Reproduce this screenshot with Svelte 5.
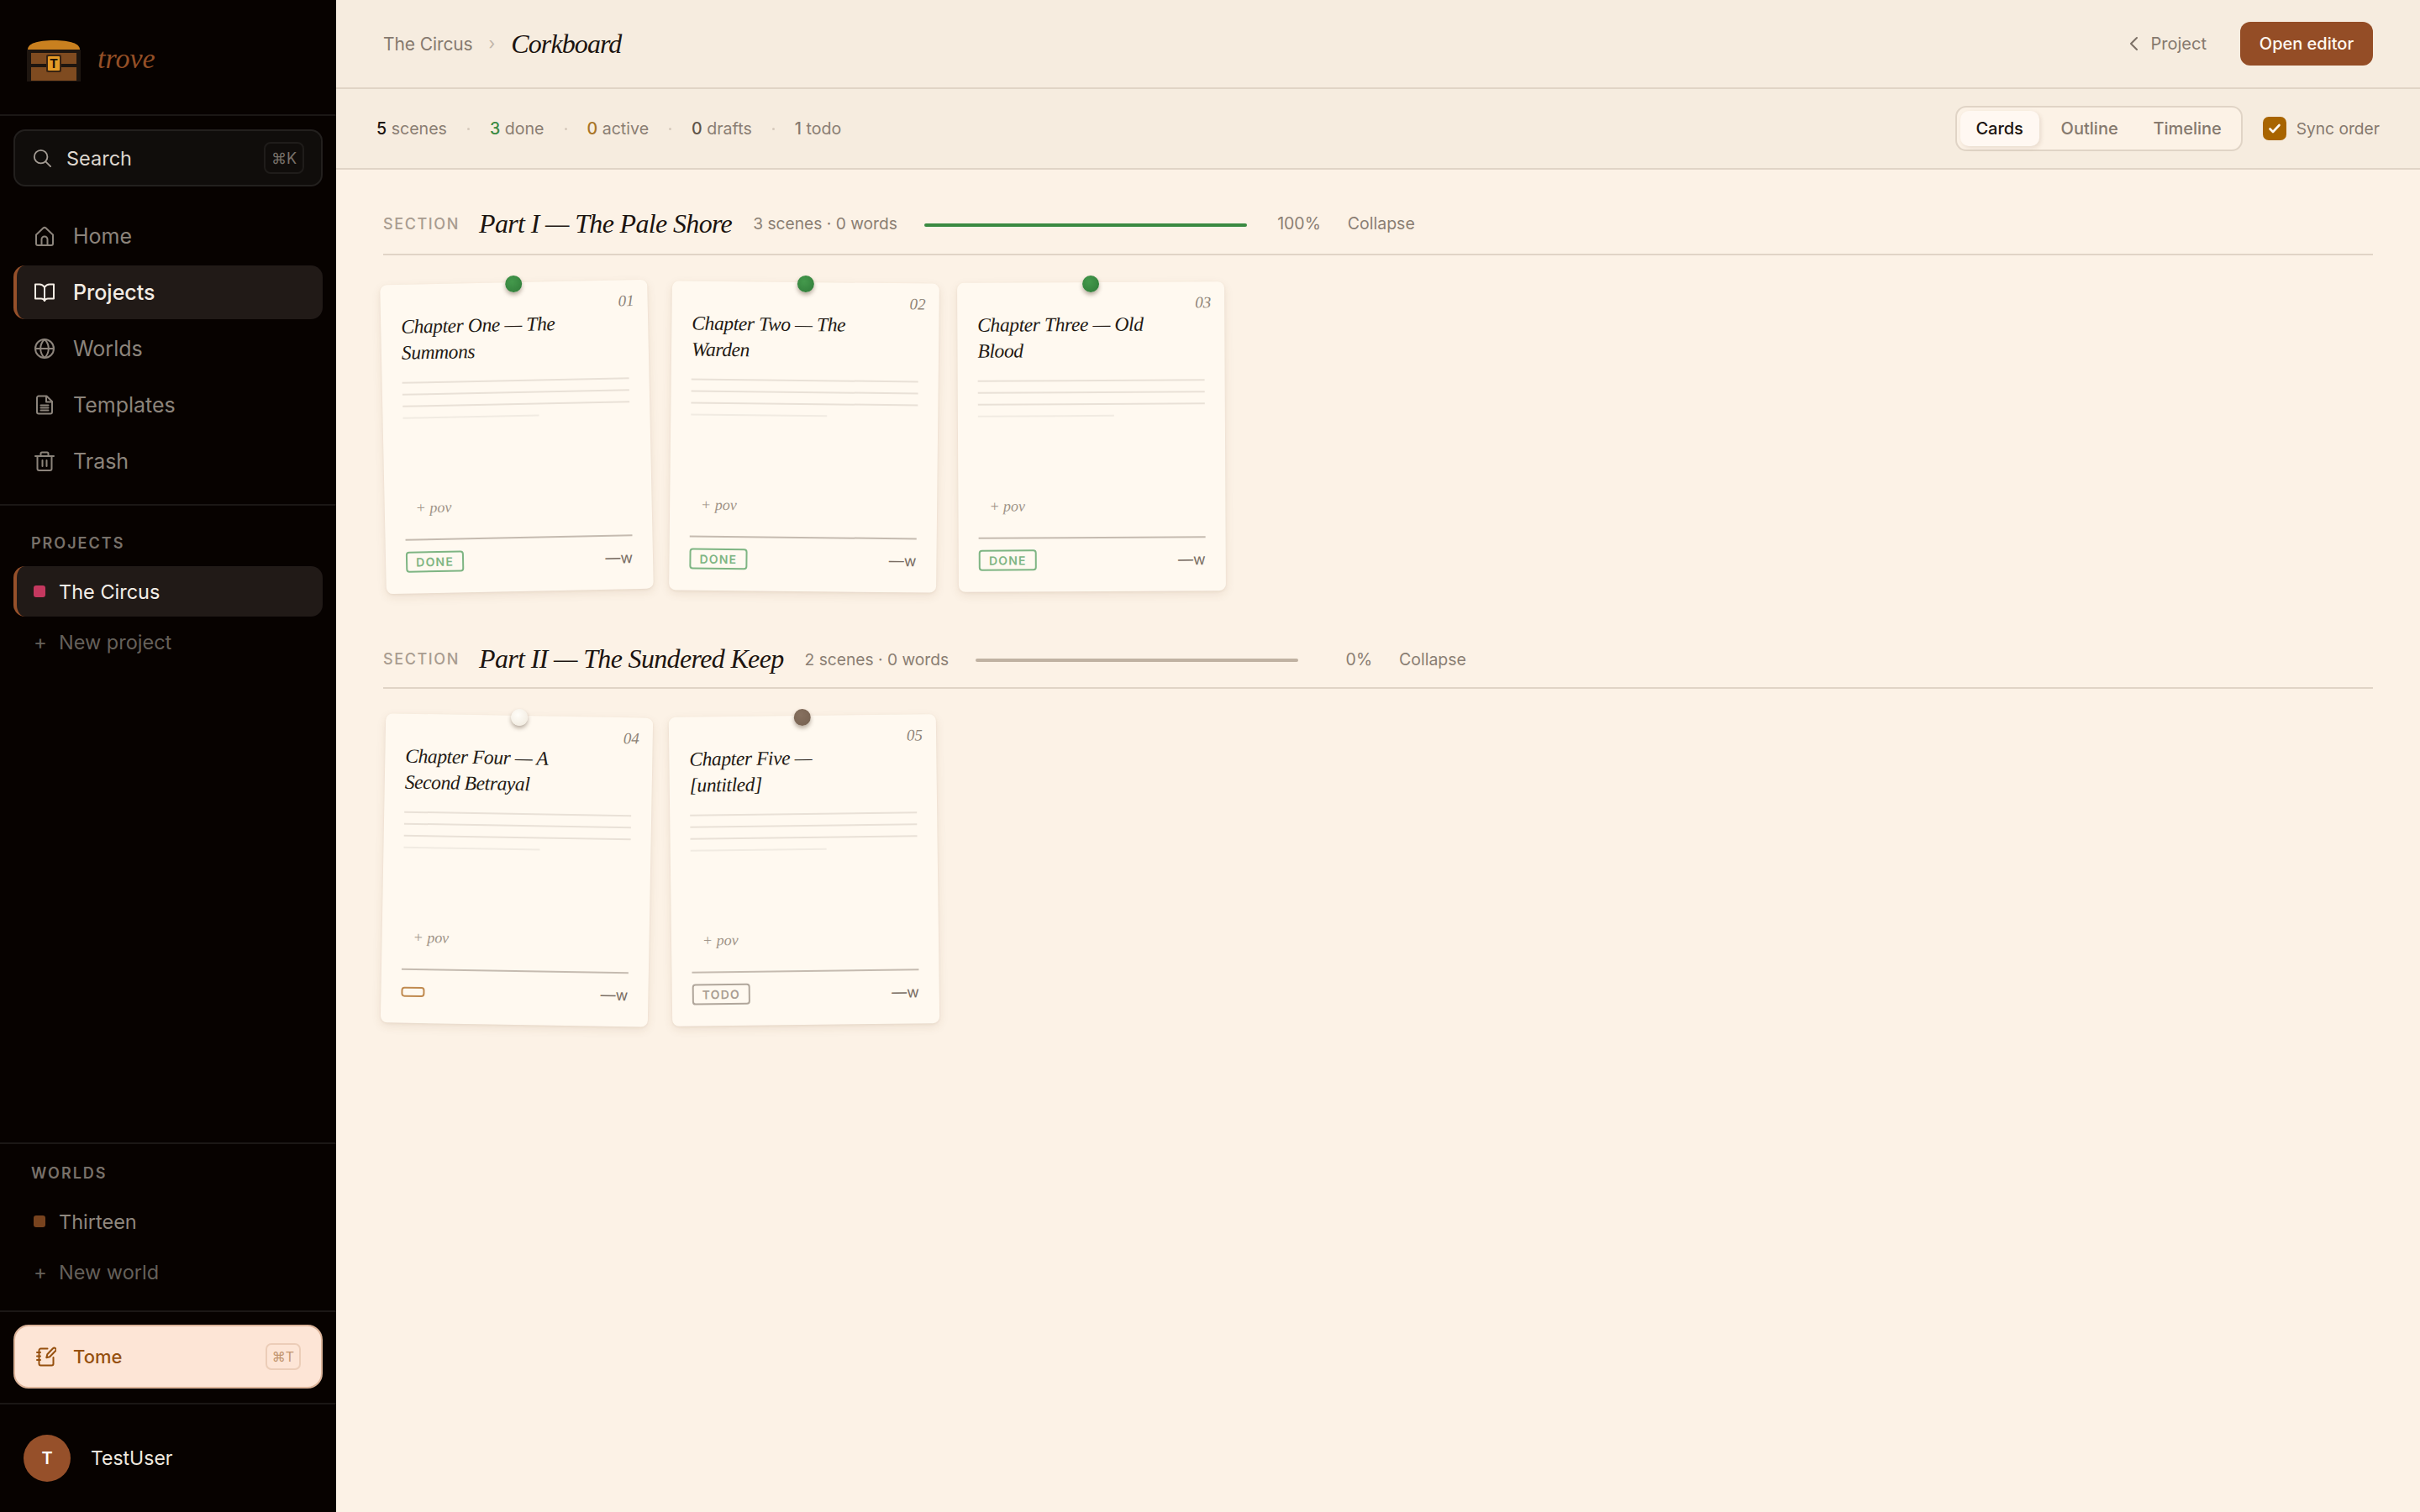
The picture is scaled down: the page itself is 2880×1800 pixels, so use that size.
<script>
	const nav = [
		{ label: 'Home', icon: 'home' },
		{ label: 'Projects', icon: 'book', active: true },
		{ label: 'Worlds', icon: 'globe' },
		{ label: 'Templates', icon: 'file' },
		{ label: 'Trash', icon: 'trash' }
	];

	const sections = [
		{
			name: 'Part I — The Pale Shore',
			meta: '3 scenes · 0 words',
			pct: 100,
			cards: [
				{ num: '01', title: 'Chapter One — The Summons', rot: -1.2, pin: 'green', badge: 'DONE', kind: 'done' },
				{ num: '02', title: 'Chapter Two — The Warden', rot: 0.6, pin: 'green', badge: 'DONE', kind: 'done' },
				{ num: '03', title: 'Chapter Three — Old Blood', rot: -0.3, pin: 'green', badge: 'DONE', kind: 'done' }
			]
		},
		{
			name: 'Part II — The Sundered Keep',
			meta: '2 scenes · 0 words',
			pct: 0,
			cards: [
				{ num: '04', title: 'Chapter Four — A Second Betrayal', rot: 1, pin: 'cream', badge: '', kind: 'empty' },
				{ num: '05', title: 'Chapter Five — [untitled]', rot: -0.7, pin: 'brown', badge: 'TODO', kind: 'todo' }
			]
		}
	];
</script>

<div class="app">
	<aside class="sidebar">
		<div class="brand">
			<svg class="chest" viewBox="0 0 64 49" width="64" height="49">
				<path d="M1 11 C1 4 12 0 32 0 C52 0 63 4 63 11 Z" fill="#c9801f" />
				<rect x="0" y="11" width="64" height="38" fill="#1e1610" />
				<rect x="5" y="15" width="54" height="13" fill="#7f4b20" />
				<rect x="5" y="32" width="54" height="16" fill="#7f4b20" />
				<rect x="23" y="17" width="18" height="21" rx="2" fill="#3a2412" />
				<rect x="25" y="19" width="14" height="17" rx="1" fill="#e59b27" />
				<text x="32" y="33" text-anchor="middle" class="chest-t">T</text>
			</svg>
			<span class="wordmark">trove</span>
		</div>

		<div class="search">
			<svg class="ico" width="22" height="22" viewBox="0 0 24 24"><circle cx="10.5" cy="10.5" r="8.5" /><path d="M17 17l6 6" /></svg>
			<span class="search-label">Search</span>
			<kbd class="search-kbd">⌘K</kbd>
		</div>

		<nav class="nav">
			{#each nav as item}
				<div class="nav-row" class:active={item.active}>
					<svg class="ico" width="24" height="24" viewBox="0 0 24 24">
						{#if item.icon === 'home'}
							<path d="M2 10.5 10.4 2.600a2.400 2.400 0 0 1 3.200 0L22 10.500V21a2 2 0 0 1-2 2H4a2 2 0 0 1-2-2z" />
							<path d="M8.500 23v-7a3.500 3.500 0 0 1 7 0v7" />
						{:else if item.icon === 'book'}
							<path d="M12 6C10.500 3.700 8.500 2.500 6 2.500H1v17h7c2 0 3.200.7 4 2.500.8-1.800 2-2.500 4-2.500h7v-17h-5c-2.500 0-4.500 1.200-6 3.500z" />
							<path d="M12 6v16" />
						{:else if item.icon === 'globe'}
							<circle cx="12" cy="12" r="11" />
							<path d="M1 12h22" />
							<path d="M12 1c3.200 3 4.800 6.700 4.800 11S15.200 20 12 23C8.800 20 7.200 16.300 7.200 12S8.800 4 12 1z" />
						{:else if item.icon === 'file'}
							<path d="M14.500 1.500H5a2 2 0 0 0-2 2v17a2 2 0 0 0 2 2h14a2 2 0 0 0 2-2V8z" />
							<path d="M14 2v6.500h7M7.500 12.500h9M7.500 15.500h9M7.500 18.500h9" />
						{:else}
							<path d="M1 6h22M7.500 6V3a1.500 1.500 0 0 1 1.500-1.500h6A1.500 1.500 0 0 1 16.500 3v3" />
							<path d="M3.500 6v15a2 2 0 0 0 2 2h13a2 2 0 0 0 2-2V6M9.500 11v7M14.500 11v7" />
						{/if}
					</svg>
					<span>{item.label}</span>
				</div>
			{/each}
		</nav>

		<div class="side-group projects">
			<div class="group-label">PROJECTS</div>
			<div class="project-row active">
				<span class="swatch crimson"></span>
				<span>The Circus</span>
			</div>
			<div class="project-row add">
				<span class="plus">+</span>
				<span>New project</span>
			</div>
		</div>

		<div class="side-group worlds">
			<div class="group-label">WORLDS</div>
			<div class="project-row muted">
				<span class="swatch rust"></span>
				<span>Thirteen</span>
			</div>
			<div class="project-row add">
				<span class="plus">+</span>
				<span>New world</span>
			</div>
		</div>

		<div class="tome-wrap">
			<div class="tome">
				<svg class="ico" width="24" height="24" viewBox="0 0 24 24">
					<path d="M13.5 2.500H5.500a2 2 0 0 0-2 2v16a2 2 0 0 0 2 2h13a2 2 0 0 0 2-2V13" />
					<path d="M1 7h4M1 11.500h4M1 16h4" />
					<path d="M20 2.300a2.100 2.100 0 0 1 3 3l-6.800 6.900-3.900 1 1-3.900z" />
				</svg>
				<span class="tome-label">Tome</span>
				<kbd class="tome-kbd">⌘T</kbd>
			</div>
		</div>

		<div class="user">
			<span class="avatar">T</span>
			<span>TestUser</span>
		</div>
	</aside>

	<main class="main">
		<header class="topbar">
			<span class="crumb">The Circus</span>
			<span class="crumb-sep">›</span>
			<span class="page-title">Corkboard</span>
			<span class="spacer"></span>
			<svg class="back" width="14" height="20" viewBox="0 0 14 20"><path d="M11 3 4 10l7 7" /></svg>
			<span class="back-label">Project</span>
			<button class="primary">Open editor</button>
		</header>

		<div class="toolbar">
			<div class="stats">
				<span class="stat"><b class="ink">5</b> scenes</span>
				<i class="dot"></i>
				<span class="stat"><b class="green">3</b> done</span>
				<i class="dot"></i>
				<span class="stat"><b class="amber">0</b> active</span>
				<i class="dot"></i>
				<span class="stat"><b class="dim">0</b> drafts</span>
				<i class="dot"></i>
				<span class="stat"><b class="soft">1</b> todo</span>
			</div>
			<span class="spacer"></span>
			<div class="segmented">
				<span class="seg on">Cards</span>
				<span class="seg outline">Outline</span>
				<span class="seg timeline">Timeline</span>
			</div>
			<span class="check">
				<svg width="16" height="14" viewBox="0 0 16 14"><path d="M2.500 7.500 6 11l7.500-8" /></svg>
			</span>
			<span class="sync">Sync order</span>
		</div>

		<div class="board">
			{#each sections as section}
				<section class="section">
					<div class="section-head">
						<span class="eyebrow">SECTION</span>
						<h2>{section.name}</h2>
						<span class="meta">{section.meta}</span>
						<span class="progress" class:full={section.pct === 100}></span>
						<span class="pct">{section.pct}%</span>
						<span class="collapse">Collapse</span>
					</div>
					<div class="cards">
						{#each section.cards as card}
							<article class="card" style="transform: rotate({card.rot}deg)">
								<span class="pin {card.pin}"></span>
								<span class="num">{card.num}</span>
								<h3>{card.title}</h3>
								<div class="lines">
									<i></i><i></i><i></i><i class="short"></i>
								</div>
								<span class="pov">+ pov</span>
								<div class="card-foot">
									<span class="badge {card.kind}">{card.badge}</span>
									<span class="words">—w</span>
								</div>
							</article>
						{/each}
					</div>
				</section>
			{/each}
		</div>
	</main>
</div>

<style>
	:global(body) {
		margin: 0;
		background: #fcf2e6;
	}

	.app {
		display: flex;
		width: 2880px;
		height: 1800px;
		overflow: hidden;
		font-family: Inter, 'Liberation Sans', sans-serif;
	}

	.ico {
		fill: none;
		stroke: currentColor;
		stroke-width: 2;
		stroke-linecap: round;
		stroke-linejoin: round;
		flex: none;
	}

	.sidebar {
		width: 400px;
		flex: none;
		background: #070200;
		display: flex;
		flex-direction: column;
		color: #8a8178;
	}

	.brand {
		height: 138px;
		box-sizing: border-box;
		border-bottom: 2px solid #1b1715;
		display: flex;
		align-items: center;
		padding-left: 32px;
		gap: 20px;
	}

	.chest {
		margin-top: 9px;
	}

	.wordmark {
		margin-top: 3px;
		font: italic 34px 'Liberation Serif', serif;
		color: #944f26;
	}

	.chest-t {
		font: 700 15px Inter, sans-serif;
		fill: #1a1007;
	}

	.search {
		margin: 16px 16px 0;
		height: 68px;
		box-sizing: border-box;
		border: 2px solid #23201e;
		border-radius: 14px;
		background: #100d0b;
		display: flex;
		align-items: center;
		padding: 0 20px 0 21px;
		color: #a49c94;
	}

	.search-label {
		margin-left: 18px;
		font-size: 23.5px;
		color: #ded7cf;
		flex: 1;
	}

	.search-kbd {
		width: 48px;
		height: 38px;
		box-sizing: border-box;
		border: 2px solid #1f1c1a;
		border-radius: 8px;
		display: flex;
		align-items: center;
		justify-content: center;
		font: 18px Inter, sans-serif;
		color: #78716a;
	}

	.nav {
		margin: 27px 16px 0;
		display: flex;
		flex-direction: column;
		gap: 3px;
		padding-bottom: 19px;
	}

	.nav-row {
		height: 64px;
		box-sizing: border-box;
		display: flex;
		align-items: center;
		padding-left: 25px;
		gap: 22px;
		font-size: 25px;
		border-radius: 14px;
		color: #8c847b;
	}

	.nav-row.active {
		background: #211a17;
		color: #f3ece4;
		font-weight: 500;
		border-left: 4px solid #96502a;
		padding-left: 21px;
	}

	.side-group {
		border-top: 2px solid #1b1715;
	}

	.projects {
		flex: 1;
		padding: 34px 16px 0;
	}

	.worlds {
		padding: 24px 16px 16px;
	}

	.group-label {
		font-size: 18px;
		font-weight: 600;
		letter-spacing: 2px;
		color: #78716a;
		padding-left: 21px;
		height: 22px;
		line-height: 22px;
		margin-bottom: 16px;
	}

	.project-row {
		height: 60px;
		box-sizing: border-box;
		display: flex;
		align-items: center;
		padding-left: 24px;
		gap: 16px;
		font-size: 23.5px;
		border-radius: 14px;
	}

	.project-row.active {
		background: #211a17;
		color: #f5efe8;
		border-left: 4px solid #96502a;
		padding-left: 20px;
	}

	.project-row.muted {
		color: #8f877e;
	}

	.project-row.add {
		color: #65605a;
	}

	.swatch {
		width: 14px;
		height: 14px;
		border-radius: 3px;
	}

	.crimson {
		background: #c4385f;
	}

	.rust {
		background: #78431e;
	}

	.plus {
		width: 14px;
		text-align: center;
		font-size: 24px;
		color: #65605a;
	}

	.tome-wrap {
		border-top: 2px solid #1b1715;
		border-bottom: 2px solid #1b1715;
		padding: 15px 16px 17px;
	}

	.tome {
		height: 76px;
		box-sizing: border-box;
		border: 2px solid #dcb49a;
		border-radius: 18px;
		background: #fde5d6;
		display: flex;
		align-items: center;
		padding: 0 24px 0 25px;
		color: #96500f;
	}

	.tome-label {
		margin-left: 20px;
		font-size: 22px;
		font-weight: 500;
		flex: 1;
	}

	.tome-kbd {
		width: 42px;
		height: 32px;
		box-sizing: border-box;
		border: 2px solid #eccdb8;
		border-radius: 7px;
		display: flex;
		align-items: center;
		justify-content: center;
		font: 16px Inter, sans-serif;
		color: #c2956f;
	}

	.user {
		height: 128px;
		display: flex;
		align-items: center;
		padding-left: 28px;
		gap: 24px;
		font-size: 23px;
		color: #efe8df;
	}

	.avatar {
		width: 56px;
		height: 56px;
		border-radius: 50%;
		background: #96502a;
		display: flex;
		align-items: center;
		justify-content: center;
		color: #fff;
		font-size: 20px;
		font-weight: 600;
	}

	.main {
		flex: 1;
		min-width: 0;
		display: flex;
		flex-direction: column;
	}

	.topbar {
		height: 106px;
		box-sizing: border-box;
		background: #f6ecdf;
		border-bottom: 2px solid #e0d4c6;
		display: flex;
		align-items: center;
		padding: 0 56px;
	}

	.crumb {
		font-size: 21px;
		letter-spacing: -0.1px;
		color: #85796e;
	}

	.crumb-sep {
		margin: 0 19px;
		font-size: 20px;
		color: #c0b4a8;
	}

	.page-title {
		font: italic 32px 'Liberation Serif', serif;
		letter-spacing: -0.9px;
		color: #1c1410;
	}

	.spacer {
		flex: 1;
	}

	.back {
		fill: none;
		stroke: #7d7167;
		stroke-width: 2;
		stroke-linecap: round;
		stroke-linejoin: round;
	}

	.back-label {
		margin-left: 14px;
		font-size: 20px;
		color: #85796e;
	}

	.primary {
		margin-left: 40px;
		width: 158px;
		height: 52px;
		border: 0;
		border-radius: 12px;
		background: #944d26;
		color: #fff8f0;
		font: 500 20px Inter, sans-serif;
		padding: 0;
	}

	.toolbar {
		height: 96px;
		box-sizing: border-box;
		background: #f6ecdf;
		border-bottom: 2px solid #e0d4c6;
		display: flex;
		align-items: center;
		padding: 0 48px;
	}

	.stats {
		display: flex;
		align-items: center;
		gap: 24px;
		font-size: 19.6px;
		color: #8a7e73;
	}

	.stat b {
		font-weight: 500;
	}

	.ink {
		color: #1c1410;
	}

	.green {
		color: #3a8a42;
	}

	.amber {
		color: #a87426;
	}

	.dim {
		color: #5f544a;
	}

	.soft {
		color: #85796e;
	}

	.dot {
		width: 3px;
		height: 3px;
		border-radius: 50%;
		background: #d6cabc;
	}

	.segmented {
		width: 342px;
		height: 54px;
		box-sizing: border-box;
		border: 2px solid #e0d4c6;
		border-radius: 13px;
		background: #fcf2e6;
		display: flex;
		align-items: center;
		padding: 0 4px;
		font-size: 20px;
		color: #85796e;
	}

	.seg {
		display: flex;
		align-items: center;
		justify-content: center;
		height: 42px;
		font-weight: 500;
	}

	.seg.on {
		width: 94px;
		background: #fff8f2;
		border-radius: 10px;
		box-shadow: 2px 2px 5px rgba(90, 60, 30, 0.12);
		color: #1c1410;
	}

	.seg.outline {
		width: 120px;
	}

	.seg.timeline {
		width: 113px;
	}

	.check {
		margin-left: 24px;
		width: 28px;
		height: 28px;
		border-radius: 7px;
		background: #a86400;
		display: flex;
		align-items: center;
		justify-content: center;
	}

	.check path {
		fill: none;
		stroke: #fff8f0;
		stroke-width: 2.6;
		stroke-linecap: round;
		stroke-linejoin: round;
	}

	.sync {
		margin-left: 12px;
		font-size: 19.2px;
		color: #85796e;
	}

	.board {
		padding: 28px 56px 0;
		display: flex;
		flex-direction: column;
		gap: 42px;
	}

	.section-head {
		height: 72px;
		border-bottom: 2px solid #e0d4c6;
		display: flex;
		align-items: center;
	}

	.section + .section .section-head {
		box-sizing: border-box;
		height: 74px;
		padding-top: 5px;
	}

	.eyebrow {
		font-size: 18px;
		font-weight: 500;
		letter-spacing: 1.6px;
		color: #a89c90;
		width: 114px;
	}

	h2 {
		margin: 0;
		font: italic 32px 'Liberation Serif', serif;
		letter-spacing: -0.65px;
		color: #1c1410;
	}

	.meta {
		margin-left: 25px;
		font-size: 19.2px;
		color: #8a7e73;
	}

	.progress {
		margin-left: 32px;
		margin-top: 3px;
		width: 384px;
		height: 4px;
		border-radius: 2px;
		background: #c0b2a2;
	}

	.progress.full {
		background: #3a8a42;
	}

	.pct {
		margin-left: 32px;
		width: 56px;
		text-align: right;
		font-size: 19.5px;
		color: #8a7e73;
	}

	.collapse {
		margin-left: 32px;
		font-size: 19.5px;
		color: #8a7e73;
	}

	.cards {
		margin-top: 32px;
		display: flex;
		gap: 24px;
	}

	.card {
		position: relative;
		width: 318px;
		height: 368px;
		box-sizing: border-box;
		padding: 35px 24px 22px;
		background: #fff9f0;
		border-radius: 8px;
		box-shadow: 0 4px 12px rgba(110, 70, 30, 0.1), 0 1px 3px rgba(110, 70, 30, 0.08);
		display: flex;
		flex-direction: column;
	}

	.pin {
		position: absolute;
		top: -8px;
		left: 149px;
		width: 20px;
		height: 20px;
		border-radius: 50%;
		box-shadow: 0 3px 5px rgba(50, 30, 10, 0.35);
	}

	.pin.green {
		background: radial-gradient(circle at 40% 35%, #44994c, #2f7a38);
	}

	.pin.cream {
		background: radial-gradient(circle at 40% 35%, #fffdf8, #efe8dc);
	}

	.pin.brown {
		background: radial-gradient(circle at 40% 35%, #86705f, #75604f);
	}

	.num {
		position: absolute;
		top: 14px;
		right: 16px;
		font: italic 19px 'Liberation Serif', serif;
		color: #8f8478;
	}

	h3 {
		margin: 0;
		width: 230px;
		font: italic 23.5px/31px 'Liberation Serif', serif;
		letter-spacing: -0.4px;
		color: #241a14;
	}

	.lines {
		margin-top: 19px;
		display: flex;
		flex-direction: column;
		gap: 12px;
	}

	.lines i {
		display: block;
		height: 2px;
		background: #e9e1d7;
	}

	.lines i.short {
		width: 60%;
		background: #f1ebe2;
	}

	.pov {
		margin-top: auto;
		margin-left: 13px;
		margin-bottom: 24px;
		font: italic 18px/26px 'Liberation Serif', serif;
		color: #a09488;
	}

	.card-foot {
		border-top: 2px solid #c5bbb0;
		padding-top: 13px;
		padding-bottom: 3px;
		height: 25px;
		display: flex;
		align-items: center;
		justify-content: space-between;
	}

	.badge {
		box-sizing: border-box;
		height: 25px;
		min-width: 69px;
		display: flex;
		align-items: center;
		justify-content: center;
		border: 2px solid #7eb583;
		border-radius: 4px;
		font-size: 14px;
		font-weight: 600;
		letter-spacing: 1.2px;
		color: #7eb583;
	}

	.badge.todo {
		border-color: #b0a69b;
		color: #a99e93;
	}

	.badge.empty {
		min-width: 0;
		width: 28px;
		height: 12px;
		border-color: #c08a4f;
	}

	.words {
		font-size: 18px;
		color: #7a6e64;
	}
</style>
